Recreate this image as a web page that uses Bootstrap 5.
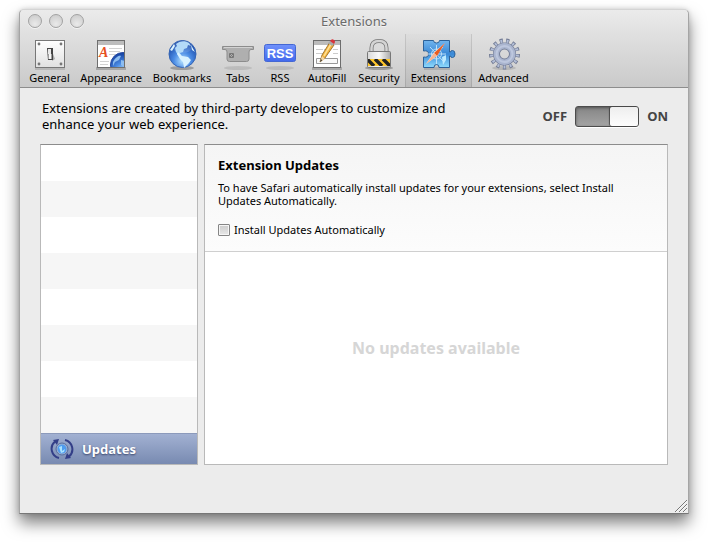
<!DOCTYPE html>
<html lang="en">
<head>
<meta charset="utf-8">
<meta name="viewport" content="width=device-width, initial-scale=1">
<title>Extensions</title>
<link href="https://cdn.jsdelivr.net/npm/bootstrap@5.3.0/dist/css/bootstrap.min.css" rel="stylesheet">
<style>
body { font-family: "Lucida Grande", "Noto Sans", "Open Sans", sans-serif; font-size: 13px; line-height: 16px; color: #000; background: #fff; }
.pref-window { margin: 9px 19px 29px; background: #ececec; border: 1px solid #a5a5a5; border-top-color: #d4d4d4; border-bottom-color: #777; border-radius: 5px 5px 0 0; box-shadow: 0 9px 16px rgba(0,0,0,.5), 0 0 5px rgba(0,0,0,.15); }
.pref-head { background: linear-gradient(#ebebeb, #e2e2e2 25%, #cacaca); border-bottom: 1px solid #8d8d8d; border-radius: 5px 5px 0 0; }
.title-line { height: 24px; padding-bottom: 2px; color: #6b6b6b; text-shadow: 0 1px 0 #f3f3f3; }
.lights { left: 8px; top: 4px; gap: 7px; }
.light { width: 14px; height: 14px; border-radius: 50%; border: 1px solid #a2a2a2; background: radial-gradient(circle at 50% 75%, #eaeaea, #cfcfcf 80%); box-shadow: 0 1px 0 #f2f2f2; }
.tools { display: grid; grid-template-columns: 51px 72px 70px 42px 42px 52px 52px 67px 63px; padding-left: 4px; height: 53px; }
.tool { background: none; border: 0; padding: 3px 0 0; font-size: 11px; line-height: 14px; color: #000; white-space: nowrap; }
.tool svg { display: block; overflow: visible; }
.tool.active { background: linear-gradient(rgba(0,0,0,.01), rgba(0,0,0,.07)); box-shadow: inset 1px 0 0 rgba(0,0,0,.1), inset -1px 0 0 rgba(0,0,0,.1); }
.pref-body { padding: 12px 20px 48px; }
.intro { max-width: 450px; padding-left: 2px; }
.switch-text { font-size: 13px; font-weight: 700; color: #444; }
.slide { appearance: none; width: 64px; height: 21px; margin: 0; border: 1px solid #4c4c4c; border-radius: 3px; background: linear-gradient(#858585, #a4a4a4); box-shadow: inset 0 1px 3px rgba(0,0,0,.4), 0 1px 0 #fff; position: relative; }
.slide::before { content: ""; position: absolute; top: 0; bottom: 0; left: 0; width: 28px; border-radius: 2px; background: linear-gradient(#eee, #fdfdfd); }
.slide:checked::before { left: auto; right: 0; box-shadow: -1px 0 1px rgba(0,0,0,.5); }
.panes { gap: 6px; margin-top: 12px; }
.pane { border: 1px solid #b9b9b9; border-top-color: #8c8c8c; background: #fff; }
.ext-list { width: 158px; background: repeating-linear-gradient(#fff 0 36px, #f6f6f6 36px 72px); }
.ext-row { height: 31px; padding-left: 9px; gap: 8px; border: 0; border-top: 1px solid #8c9abb; color: #fff; font-weight: 700; text-shadow: 0 1px 2px rgba(20,30,70,.7); background: linear-gradient(#a2b1d2, #788ab1); }
.update-head { padding: 12px 13px 13px; background: linear-gradient(#f5f5f5, #fcfcfc); border-bottom: 1px solid #cfcfcf; }
.update-head h2 { font-size: 13px; line-height: 16px; font-weight: 700; margin: 0 0 8px; }
.update-head p { font-size: 11px; line-height: 13px; margin: 0 0 15px; max-width: 430px; }
.check-line { font-size: 11px; line-height: 16px; gap: 4px; }
.tick { appearance: none; width: 12px; height: 12px; margin: 0; border: 1px solid #858585; border-radius: 1px; background: linear-gradient(#ccc, #e7e7e7); box-shadow: inset 0 0 0 1px #f5f5f5; }
.tick:checked { background: #557cbb; }
.empty-note { font-size: 16px; line-height: 20px; font-weight: 700; color: #d6d6d6; padding-bottom: 20px; }
.grip { right: 1px; bottom: 1px; }
</style>
<script src="https://cdn.jsdelivr.net/npm/bootstrap@5.3.0/dist/js/bootstrap.bundle.min.js"></script>
</head>
<body class="min-vh-100 d-flex flex-column">
<main class="pref-window flex-grow-1 d-flex flex-column position-relative">
  <header class="pref-head">
    <div class="title-line d-flex align-items-center justify-content-center position-relative">
      <div class="lights position-absolute d-flex">
        <button type="button" class="light p-0" aria-label="Close"></button>
        <button type="button" class="light p-0" aria-label="Minimize"></button>
        <button type="button" class="light p-0" aria-label="Zoom"></button>
      </div>
      <span>Extensions</span>
    </div>
    <nav class="tools" aria-label="Preferences">
      <button type="button" class="tool d-flex flex-column align-items-center">
        <svg width="32" height="34" viewBox="0 0 32 34"><defs><linearGradient id="plate" x2="0" y2="1"><stop stop-color="#fff"/><stop offset="1" stop-color="#e0e0e0"/></linearGradient></defs><rect x="1" y="31" width="30" height="2" fill="#000" opacity=".12"/><rect x="1.500" y="3.500" width="29" height="27" fill="url(#plate)" stroke="#777"/><g fill="#777"><circle cx="5" cy="7" r="1.400"/><circle cx="27" cy="7" r="1.400"/><circle cx="5" cy="27" r="1.400"/><circle cx="27" cy="27" r="1.400"/></g><path d="M18 14l3 8-3 2z" fill="#aaa"/><path d="M13 11h6v12h-5z" fill="#444"/><path d="M14 12h3v5h-3z" fill="#e8e8e8"/><path d="M14.500 17h3v5h-3z" fill="#f6f6f6"/></svg>
        General</button>
      <button type="button" class="tool d-flex flex-column align-items-center">
        <svg width="32" height="34" viewBox="0 0 32 34"><defs><radialGradient id="sea" cx=".5" cy=".75" r=".7"><stop stop-color="#b8e4ff"/><stop offset=".45" stop-color="#4c8de5"/><stop offset="1" stop-color="#1846a6"/></radialGradient><clipPath id="page"><path d="M4 8h25v22H4z"/></clipPath></defs><rect x="1" y="30" width="30" height="3" fill="#000" opacity=".2"/><rect x="2.500" y="3.500" width="27" height="27" fill="#fff" stroke="#6f6f6f"/><path d="M3 4h26v4H3z" fill="#bdbdbd"/><path d="M14 11.500h13M14 14.500h11M14 17.500h6M5 24.500h9M5 27.500h8" stroke="#d2d2d2"/><text x="4" y="20" font-family="Liberation Serif, serif" font-size="14" font-style="italic" font-weight="700" fill="#e7501e">A</text><g clip-path="url(#page)"><circle cx="28" cy="28" r="12.500" fill="url(#sea)" stroke="#2548a0"/><path d="M18 25c3-6 7-7 8-6l-2 4-4 2-2 4zM26 23l4 1v7l-4-3z" fill="#8dbdf0"/></g></svg>
        Appearance</button>
      <button type="button" class="tool d-flex flex-column align-items-center">
        <svg width="32" height="34" viewBox="0 0 32 34"><ellipse cx="16" cy="31" rx="12" ry="2" fill="#000" opacity=".25"/><circle cx="16.500" cy="17" r="13.500" fill="url(#sea)" stroke="#3565b4"/><path d="M10 7c3-3 9-4 13-1l2 3-3-1-1 3-3 1-1 3-3 1 1 2-3 0-2-3-1-4 2-2z" fill="#a9d5f8"/><path d="M12 15l4 4 6 1 3 3-2 3-4 4-1 1-1-6-3-3-3-5zM25 8l4 7-3-2zM4 13l4-6 1 2-3 5z" fill="#d9f2ff"/><ellipse cx="16.500" cy="10" rx="10" ry="6" fill="#fff" opacity=".12"/></svg>
        Bookmarks</button>
      <button type="button" class="tool d-flex flex-column align-items-center">
        <svg width="32" height="34" viewBox="0 0 32 34"><ellipse cx="16" cy="31" rx="14" ry="2" fill="#000" opacity=".1"/><path d="M.5 9.500h31v3h-2.500q-2 0-2 2.500v7q0 2.500-2.500 2.500h-17q-2.500 0-2.500-2.500v-7q0-2.500-2-2.500H.5z" fill="#afafaf" stroke="#8c8c8c"/><path d="M7.500 16.500h4v4h-4zM8 17l3 3m0-3l-3 3" stroke="#777" fill="none"/><path d="M2 10.500h28" stroke="#d2d2d2"/></svg>
        Tabs</button>
      <button type="button" class="tool d-flex flex-column align-items-center">
        <svg width="32" height="34" viewBox="0 0 32 34"><defs><linearGradient id="feed" x2="0" y2="1"><stop stop-color="#7091fb"/><stop offset="1" stop-color="#4269ed"/></linearGradient></defs><ellipse cx="16" cy="31" rx="14" ry="2" fill="#000" opacity=".1"/><rect x=".5" y="7.500" width="31" height="17" rx="2" fill="url(#feed)" stroke="#4467d3"/><text x="16" y="20.500" text-anchor="middle" font-family="Liberation Sans, sans-serif" font-size="13" font-weight="700" fill="#fff">RSS</text></svg>
        RSS</button>
      <button type="button" class="tool d-flex flex-column align-items-center">
        <svg width="32" height="34" viewBox="0 0 32 34"><path d="M1 30h30v3H1z" opacity=".2"/><rect x="2.500" y="3.500" width="27" height="27" fill="#fff" stroke="#6d6d6d"/><path d="M3 4h26v4H3z" fill="#bcbcbc"/><path d="M5 12.500h13M5 16.500h12M22 12.500h5M22 16.500h5" stroke="#ccc" stroke-dasharray="7 1"/><path d="M5.500 21.500h21v5h-21z" fill="#fafafa" stroke="#999"/><path d="M9 25l2-7L19 5l4 3-9 13z" fill="#f3b33e" stroke="#8d611c" stroke-width=".8"/><path d="M13 19l7-12" stroke="#ffe092" stroke-width="1.500"/><path d="M9 25l2-6 3 3z" fill="#f3d8aa"/><path d="M9 25l1-3 1 1.500z" fill="#222"/><path d="M17 6l4 3 2-2-4-3z" fill="#aaa"/><path d="M19 4q2-3 4-1 2 1 0 4z" fill="#d8343c"/></svg>
        AutoFill</button>
      <button type="button" class="tool d-flex flex-column align-items-center">
        <svg width="32" height="34" viewBox="0 0 32 34"><defs><linearGradient id="metal" x2="1" y2="0"><stop stop-color="#d9d9d9"/><stop offset=".5" stop-color="#fafafa"/><stop offset="1" stop-color="#aaa"/></linearGradient><clipPath id="band"><path d="M5 22h22v7H5z"/></clipPath></defs><ellipse cx="16" cy="31" rx="14" ry="2" opacity=".25"/><path d="M8.500 16v-5q0-7 7.500-7T23.500 11v5" fill="none" stroke="#777" stroke-width="4"/><path d="M8.500 16v-5q0-7 7.500-7T23.500 11v5" fill="none" stroke="#d4d4d4" stroke-width="2.500"/><rect x="4.500" y="14.500" width="23" height="16" rx="1" fill="url(#metal)" stroke="#777"/><path d="M5 22h22v7H5z" fill="#ffc72c"/><path d="M4 22l7 7M12 22l7 7M20 22l7 7" stroke="#222" stroke-width="3.500" clip-path="url(#band)"/></svg>
        Security</button>
      <button type="button" class="tool active d-flex flex-column align-items-center" aria-current="page">
        <svg width="32" height="34" viewBox="0 0 32 34"><defs><linearGradient id="piece" x2="0" y2="1"><stop stop-color="#72b5ee"/><stop offset=".5" stop-color="#3988d6"/><stop offset="1" stop-color="#8fdcff"/></linearGradient></defs><path d="M1 30h26v3H1z" opacity=".12"/><path d="M.5 3.500h10q0 2.500 3 2.500t3-2.500h10v11.500h1q0-1.500 2-1.500 2.500 0 2.500 3.500t-2.500 3.500q-2 0-2-1.500h-1v11.500H16q0-3-2.500-3T11 30.500H.5V20q5 1 5-3t-5-3z" fill="url(#piece)" stroke="#2c6199"/><g stroke="#bde0fa" fill="none"><path d="M13.500 8v19M5 17h18M7 10l13 14M20 10L7 24"/><circle cx="13.500" cy="17" r="5"/></g><path d="M3 27l8-12 11-9-8 13z" fill="#eee"/><path d="M11 16l11-10-8 13z" fill="#e85b22"/><path d="M3 27l8-11 3 3z" fill="#f8b391"/><path d="M19 20l4-2v5l-3 5z" fill="#bdeaff"/></svg>
        Extensions</button>
      <button type="button" class="tool d-flex flex-column align-items-center">
        <svg width="32" height="34" viewBox="0 0 32 34"><ellipse cx="16" cy="31" rx="12" ry="2" opacity=".12"/><g fill="none"><circle cx="16.500" cy="17" r="13" pathLength="130" stroke="#747d96" stroke-width="5" stroke-dasharray="5 5"/><circle cx="16.500" cy="17" r="12.500" pathLength="130" stroke="#b4bfd8" stroke-width="4" stroke-dasharray="3 7" stroke-dashoffset="-1"/><circle cx="16.500" cy="17" r="8" stroke="#747d96" stroke-width="7"/><circle cx="16.500" cy="17" r="8.200" stroke="#aab5cf" stroke-width="5.500"/><circle cx="16.500" cy="17" r="8" stroke="#bdc7de" stroke-width="2"/></g></svg>
        Advanced</button>
    </nav>
  </header>
  <div class="pref-body flex-grow-1 d-flex flex-column">
    <div class="d-flex align-items-center justify-content-between">
      <p class="intro m-0">Extensions are created by third-party developers to customize and enhance your web experience.</p>
      <label class="switch-text d-flex align-items-center gap-2"><span>OFF</span><input class="slide" type="checkbox" role="switch" checked aria-label="Extensions"><span>ON</span></label>
    </div>
    <div class="panes d-flex flex-grow-1">
      <div class="pane ext-list flex-shrink-0 d-flex flex-column justify-content-end">
        <button type="button" class="ext-row d-flex align-items-center w-100">
          <svg width="24" height="24" viewBox="0 0 24 24"><g fill="none" stroke="#333e87" stroke-width="2"><path d="M9 21A9.500 9.500 0 0 1 5 4.500M15 3a9.500 9.500 0 0 1 4 16.500"/></g><path d="M3 3l6-1-2 6zM21 21l-6 1 2-6z" fill="#333e87"/><circle cx="12" cy="12" r="6" fill="#9badce" stroke="#566d9e"/><circle cx="12" cy="12" r="4.500" fill="#4f9bee"/><path d="M9 10l3-1v5l3-2-1 3-3 1z" fill="#a8e2ff"/></svg>
          Updates</button>
      </div>
      <section class="pane flex-grow-1 d-flex flex-column">
        <div class="update-head">
          <h2>Extension Updates</h2>
          <p>To have Safari automatically install updates for your extensions, select Install Updates Automatically.</p>
          <label class="check-line d-flex align-items-center"><input class="tick" type="checkbox">Install Updates Automatically</label>
        </div>
        <div class="empty-note flex-grow-1 d-flex align-items-center justify-content-center">No updates available</div>
      </section>
    </div>
  </div>
  <svg class="grip position-absolute" width="12" height="12" viewBox="0 0 12 12" stroke="#777"><path d="M0 12L12 0M4 12l8-8M8 12l4-4"/><path d="M1 12L12 1M5 12l7-7M9 12l3-3" stroke="#fff" opacity=".6"/></svg>
</main>
</body>
</html>
